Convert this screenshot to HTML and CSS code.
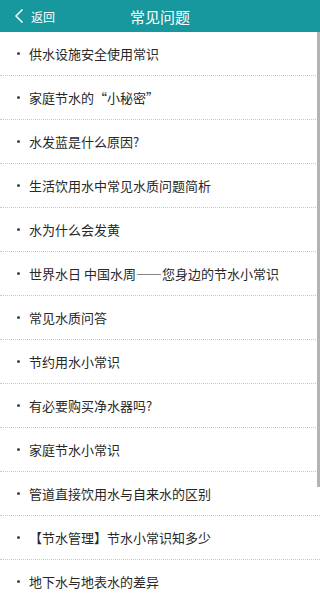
FILE: index.html
```html
<!DOCTYPE html>
<html lang="zh-CN">
<head>
<meta charset="utf-8">
<title>常见问题</title>
<link rel="stylesheet" href="styles.css">
</head>
<body>
<header class="topbar">
  <a class="back" href="#">
    <svg class="back-icon" width="10" height="16" viewBox="0 0 10 16"><path d="M8.5 1.5 L2 8 L8.5 14.5" fill="none" stroke="#fff" stroke-width="1.5"/></svg>
    <span>返回</span>
  </a>
  <h1 class="title">常见问题</h1>
</header>
<ul class="list">
  <li class="item">供水设施安全使用常识</li>
  <li class="item">家庭节水的“小秘密”</li>
  <li class="item">水发蓝是什么原因?</li>
  <li class="item">生活饮用水中常见水质问题简析</li>
  <li class="item">水为什么会发黄</li>
  <li class="item">世界水日 中国水周——您身边的节水小常识</li>
  <li class="item">常见水质问答</li>
  <li class="item">节约用水小常识</li>
  <li class="item">有必要购买净水器吗?</li>
  <li class="item">家庭节水小常识</li>
  <li class="item">管道直接饮用水与自来水的区别</li>
  <li class="item">【节水管理】节水小常识知多少</li>
  <li class="item">地下水与地表水的差异</li>
</ul>
<div class="scrollbar"></div>
</body>
</html>
```

FILE: styles.css
```css
html, body {
  margin: 0;
  padding: 0;
  background: #fff;
  font-family: "Noto Sans CJK SC", "Noto Sans", sans-serif;
  overflow: hidden;
}
body {
  width: 320px;
  height: 600px;
  position: relative;
}
.topbar {
  height: 32px;
  background: #17979e;
  display: flex;
  align-items: center;
  justify-content: center;
  position: relative;
  color: #fff;
}
.back {
  position: absolute;
  left: 14px;
  top: 0;
  height: 32px;
  display: flex;
  align-items: center;
  gap: 7px;
  color: #fff;
  text-decoration: none;
  font-size: 12px;
}
.back-icon {
  display: block;
}
.title {
  margin: 0;
  font-size: 15px;
  font-weight: 400;
  letter-spacing: 0;
}
.list {
  list-style: none;
  margin: 0;
  padding: 0;
}
.item {
  height: 43px;
  border-bottom: 1px dotted #c8c8c8;
  display: flex;
  align-items: center;
  padding-left: 17px;
  font-size: 13px;
  color: #282828;
  white-space: nowrap;
}
.item::before {
  content: "";
  width: 3px;
  height: 3px;
  background: #444;
  border-radius: 50%;
  margin-right: 9px;
}
.scrollbar {
  position: absolute;
  right: 0;
  top: 32px;
  width: 3px;
  height: 455px;
  background: #b3b3b3;
}
```
